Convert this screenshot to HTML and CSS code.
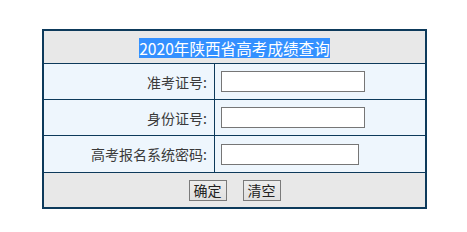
FILE: index.html
```html
<!DOCTYPE html>
<html lang="zh-CN">
<head>
<meta charset="utf-8">
<title>2020年陕西省高考成绩查询</title>
<link rel="stylesheet" href="styles.css">
</head>
<body>
<form class="panel">
  <div class="title"><span class="title-text">2020年陕西省高考成绩查询</span></div>
  <div class="row">
    <label class="label">准考证号:</label>
    <div class="field"><input class="input" type="text"></div>
  </div>
  <div class="row">
    <label class="label">身份证号:</label>
    <div class="field"><input class="input" type="text"></div>
  </div>
  <div class="row row-last">
    <label class="label">高考报名系统密码:</label>
    <div class="field"><input class="input input-short" type="password"></div>
  </div>
  <div class="actions">
    <button class="btn" type="button">确定</button>
    <button class="btn" type="reset">清空</button>
  </div>
</form>
</body>
</html>
```
FILE: styles.css
```css
html, body {
  margin: 0;
  padding: 0;
  background: #ffffff;
}
body {
  padding-top: 29px;
  padding-left: 2px;
  font-family: "Noto Sans CJK SC", "Microsoft YaHei", sans-serif;
}
.panel {
  width: 385px;
  box-sizing: border-box;
  margin: 0 auto;
  border: 2px solid #0d3a5b;
  background: #eef6fd;
}
.title {
  height: 32px;
  border-bottom: 1px solid #0d3a5b;
  background: #e8e8e8;
  display: flex;
  align-items: center;
  justify-content: center;
}
.title-text {
  display: inline-block;
  height: 20px;
  line-height: 20px;
  font-size: 15.6px;
  color: #ffffff;
  background: #3390ff;
  margin-top: 1px;
}
.row {
  display: grid;
  grid-template-columns: 171px 1fr;
  height: 35px;
  border-bottom: 1px solid #0d3a5b;
}
.row-last {
  height: 36px;
}
.label {
  border-right: 1px solid #0d3a5b;
  display: flex;
  align-items: center;
  justify-content: flex-end;
  padding-right: 7px;
  font-size: 14px;
  color: #3a3a3a;
}
.field {
  display: flex;
  align-items: center;
  padding-left: 6px;
}
.input {
  box-sizing: border-box;
  width: 144px;
  height: 21px;
  margin: 0;
  border: 1px solid #767676;
  background: #ffffff;
  padding: 0 2px;
}
.input-short {
  width: 138px;
}
.actions {
  height: 34px;
  background: #e8e8e8;
  display: flex;
  align-items: center;
  justify-content: center;
  gap: 16px;
}
.btn {
  box-sizing: border-box;
  width: 38px;
  height: 21px;
  margin: 0;
  padding: 0;
  border: 1px solid #7a7a7a;
  background: linear-gradient(#ededed, #e0e0e0);
  font-family: "Noto Sans CJK SC", sans-serif;
  font-size: 14px;
  line-height: 19px;
  color: #222222;
}
```
